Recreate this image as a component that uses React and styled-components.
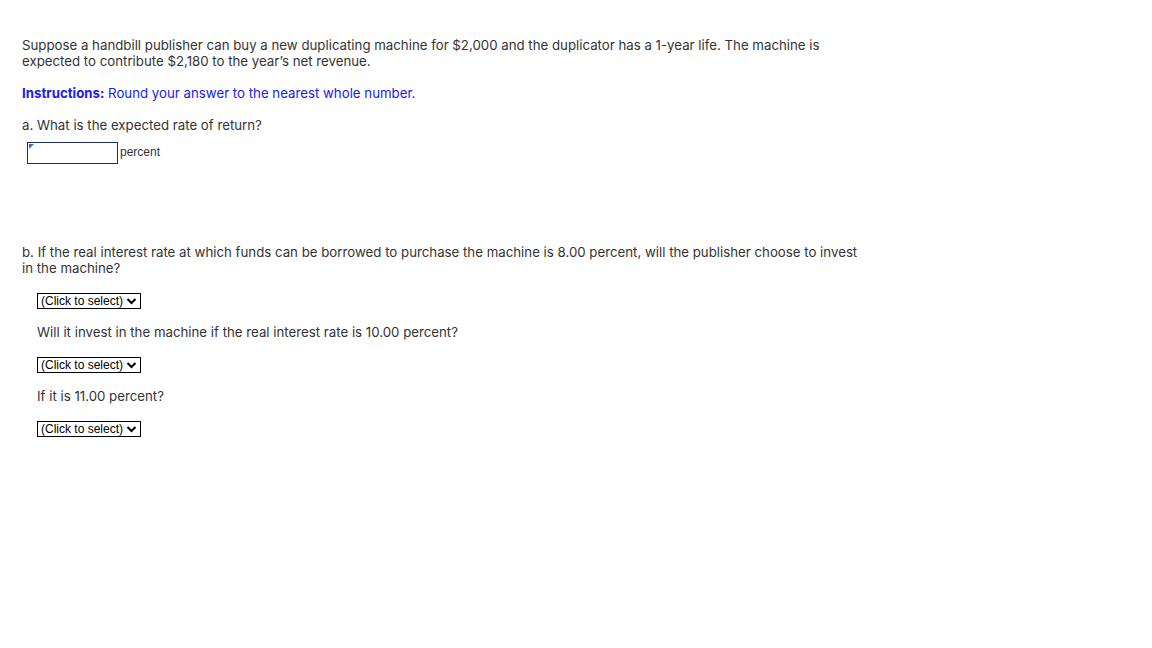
import React from 'react';
import styled, { createGlobalStyle } from 'styled-components';

const GlobalStyle = createGlobalStyle`
  body {
    margin: 0;
    background: #fff;
  }
`;

const Page = styled.div`
  padding: 37px 0 0 22px;
  width: 900px;
  font-family: Inter, "Liberation Sans", sans-serif;
  font-size: 13.25px;
  line-height: 16px;
  color: #333;
`;

const P = styled.p`
  margin: 0 0 ${(p) => p.$gap || 16}px;
`;

const Instructions = styled.p`
  margin: 0 0 16px;
  color: #2020e8;
`;

const InputRow = styled.div`
  display: flex;
  align-items: center;
  gap: 2px;
  margin: 0 0 80px 5px;
`;

const AnswerBox = styled.div`
  position: relative;
  width: 89px;
  height: 20px;
  border: 1px solid #1d2f55;
  &::before {
    content: '';
    position: absolute;
    left: 1px;
    top: 1px;
    border-top: 5px solid #3a6fc4;
    border-right: 5px solid transparent;
  }
`;

const Unit = styled.span`
  font-family: "Liberation Sans", Arial, sans-serif;
  font-size: 12px;
  color: #333;
  margin-bottom: 2px;
`;

const Indented = styled.div`
  padding-left: 15px;
`;

const Select = styled.div`
  display: inline-flex;
  align-items: center;
  gap: 3px;
  height: 14px;
  padding: 0 3px 0 3px;
  border: 1px solid #000;
  font-family: "Liberation Sans", Arial, sans-serif;
  font-size: 12px;
  line-height: 14px;
  color: #000;
  margin-bottom: 15px;
`;

const Chevron = () => (
  <svg width="11" height="8" viewBox="0 0 11 8">
    <path d="M1.5 2 L5.5 6 L9.5 2" fill="none" stroke="#000" strokeWidth="2" />
  </svg>
);

const Dropdown = () => (
  <div>
    <Select>
      (Click to select) <Chevron />
    </Select>
  </div>
);

export default function App() {
  return (
    <>
      <GlobalStyle />
      <Page>
        <P>
          Suppose a handbill publisher can buy a new duplicating machine for $2,000 and the duplicator has a
          1-year life. The machine is
          <br />
          expected to contribute $2,180 to the year’s net revenue.
        </P>
        <Instructions>
          <b>Instructions:</b> Round your answer to the nearest whole number.
        </Instructions>
        <P $gap={9}>a. What is the expected rate of return?</P>
        <InputRow>
          <AnswerBox />
          <Unit>percent</Unit>
        </InputRow>
        <P $gap={16}>
          b. If the real interest rate at which funds can be borrowed to purchase the machine is 8.00 percent,
          will the publisher choose to invest
          <br />
          in the machine?
        </P>
        <Indented>
          <Dropdown />
          <P>Will it invest in the machine if the real interest rate is 10.00 percent?</P>
          <Dropdown />
          <P>If it is 11.00 percent?</P>
          <Dropdown />
        </Indented>
      </Page>
    </>
  );
}
